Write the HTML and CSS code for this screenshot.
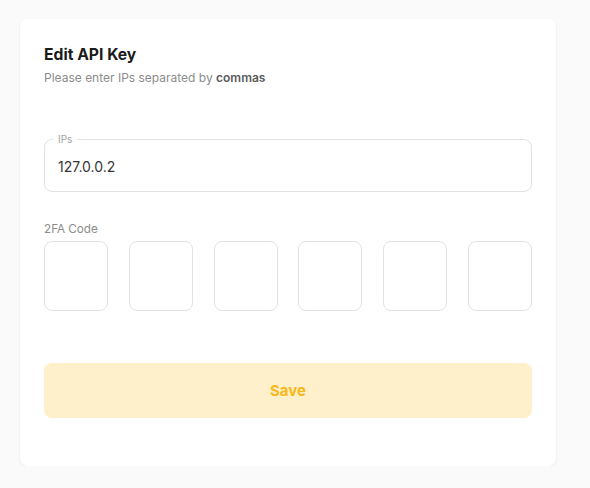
FILE: index.html
```html
<!DOCTYPE html>
<html>
<head>
<meta charset="utf-8">
<link rel="stylesheet" href="styles.css">
</head>
<body>
<div class="card">
  <h1 class="title">Edit API Key</h1>
  <p class="subtitle">Please enter IPs separated by <b>commas</b></p>
  <fieldset class="field">
    <legend class="legend">IPs</legend>
    <div class="value">127.0.0.2</div>
  </fieldset>
  <div class="label">2FA Code</div>
  <div class="codes">
    <div class="code"></div>
    <div class="code"></div>
    <div class="code"></div>
    <div class="code"></div>
    <div class="code"></div>
    <div class="code"></div>
  </div>
  <button class="save">Save</button>
</div>
</body>
</html>
```
FILE: styles.css
```css
html, body {
  margin: 0;
  padding: 0;
  background: #fafafa;
  font-family: Inter, "Noto Sans", sans-serif;
}
body {
  padding: 19px 0 0 20px;
}
.card {
  box-sizing: border-box;
  width: 536px;
  height: 447px;
  background: #fff;
  border-radius: 8px;
  box-shadow: 0 1px 3px rgba(0,0,0,0.08);
  padding: 26px 24px 48px;
}
.title {
  margin: 0;
  font-size: 15.7px;
  line-height: 20px;
  font-weight: 700;
  color: #1b1b1b;
}
.subtitle {
  margin: 5px 0 0;
  font-size: 12px;
  line-height: 16px;
  color: #8c8c8c;
}
.subtitle b {
  color: #5a5a5a;
  font-weight: 600;
}
.field {
  margin: 47px 0 0;
  padding: 0 13px;
  border: 1px solid #e2e2e2;
  border-radius: 8px;
  min-width: 0;
}
.legend {
  padding: 0 5px;
  margin-left: -5px;
  font-size: 10px;
  line-height: 12px;
  color: #a0a0a0;
}
.value {
  padding: 12px 0 14px;
  font-size: 14px;
  line-height: 20px;
  color: #363636;
}
.label {
  margin-top: 29px;
  font-size: 11.7px;
  line-height: 16px;
  color: #8c8c8c;
}
.codes {
  margin-top: 4px;
  display: grid;
  grid-template-columns: repeat(6, 1fr);
  gap: 20.6px;
}
.code {
  box-sizing: border-box;
  height: 70px;
  border: 1px solid #e2e2e2;
  border-radius: 8px;
}
.save {
  display: block;
  width: 100%;
  margin-top: 52px;
  height: 55px;
  border: none;
  border-radius: 8px;
  background: #fef0cb;
  color: #f9b81a;
  font-family: Inter, "Noto Sans", sans-serif;
  font-size: 15px;
  font-weight: 700;
}
```
